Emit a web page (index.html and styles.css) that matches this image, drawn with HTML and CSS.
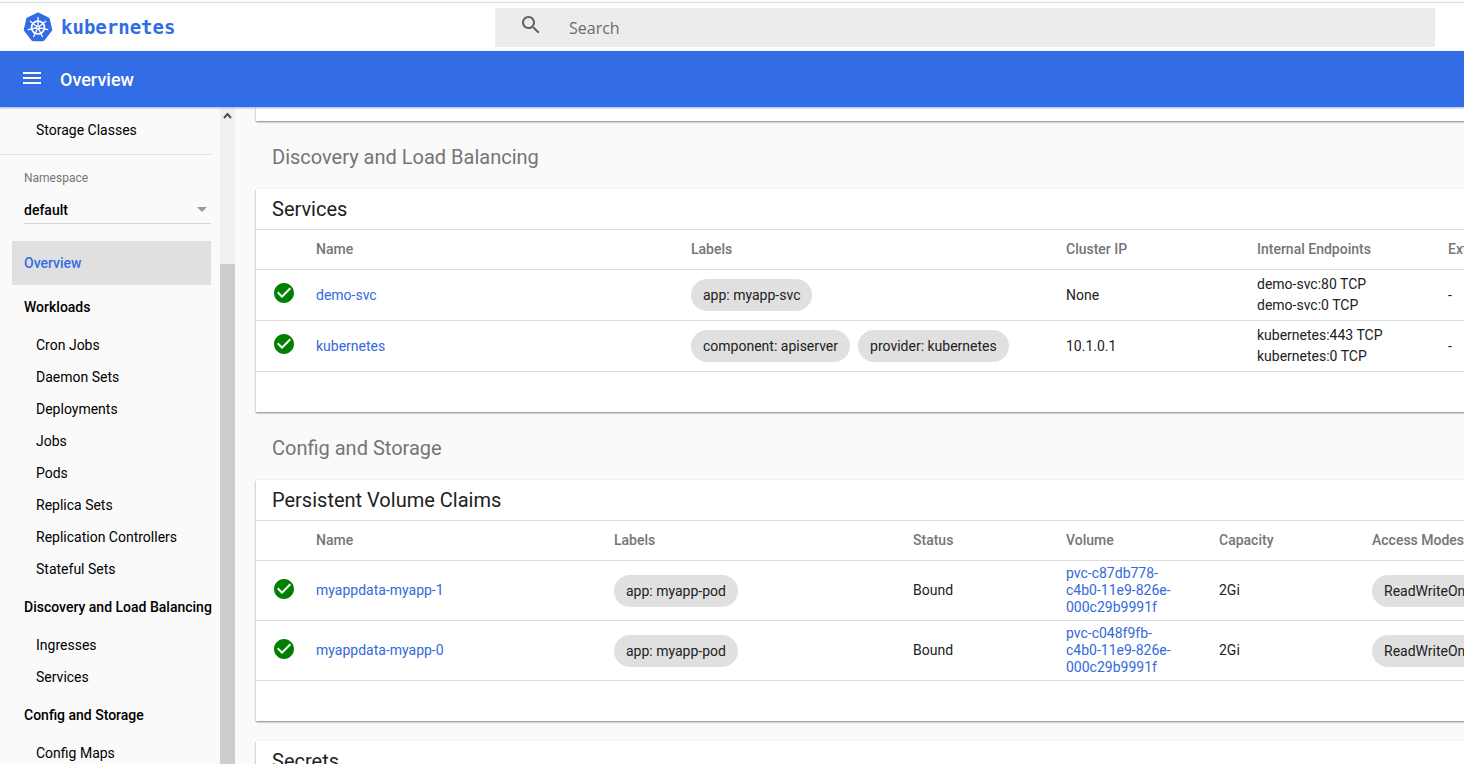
FILE: index.html
```html
<!DOCTYPE html>
<html lang="en">
<head>
<meta charset="utf-8">
<title>Kubernetes Dashboard</title>
<link rel="stylesheet" href="styles.css">
</head>
<body>
<svg class="defs" aria-hidden="true">
  <symbol id="check" viewBox="0 0 24 24"><path d="M12 2C6.48 2 2 6.48 2 12s4.480 10 10 10 10-4.480 10-10S17.520 2 12 2zm-2 15l-5-5 1.410-1.410L10 14.170l7.590-7.590L19 8l-9 9z"/></symbol>
</svg>
<header class="top">
  <a class="brand" href="#">
    <svg class="logo" viewBox="0 0 30 30" aria-hidden="true">
      <path d="M15 1.200 25.800 6.400 28.500 18 21 27.700Q20.500 28.400 19.600 28.400H10.400Q9.500 28.400 9 27.700L1.500 18 4.200 6.400Z" fill="#326ce5" stroke="#326ce5" stroke-width="1.600" stroke-linejoin="round"/>
      <g fill="none" stroke="#fff">
        <circle cx="15" cy="15.500" r="6.400" stroke-width="1.800"/>
        <path stroke-width="1.300" stroke-linecap="round" d="M15 15.500V5.500M15 15.500l7.800-6.200M15 15.500l9.700 2.200M15 15.500l4.300 9M15 15.500l-4.300 9M15 15.500l-9.700 2.200M15 15.500L7.200 9.300"/>
      </g>
      <circle cx="15" cy="15.500" r="2" fill="#fff"/><circle cx="15" cy="15.500" r=".8" fill="#326ce5"/>
    </svg>
    <span>kubernetes</span>
  </a>
  <form class="search">
    <svg class="icon" viewBox="0 0 24 24" aria-hidden="true"><path d="M15.500 14h-.79l-.28-.27C15.410 12.590 16 11.110 16 9.500 16 5.910 13.090 3 9.500 3S3 5.910 3 9.500 5.910 16 9.500 16c1.610 0 3.090-.59 4.230-1.570l.27.28v.79l5 4.990L20.490 19l-4.990-5zm-6 0C7.010 14 5 11.990 5 9.500S7.010 5 9.500 5 14 7.010 14 9.500 11.990 14 9.500 14z"/></svg>
    <input type="text" placeholder="Search" aria-label="Search">
  </form>
</header>
<div class="bar">
  <button class="menu" type="button" aria-label="Menu"><svg class="icon" viewBox="0 0 24 24" aria-hidden="true"><path d="M3 18h18v-2H3v2zm0-5h18v-2H3v2zm0-7v2h18V6H3z"/></svg></button>
  <h1>Overview</h1>
</div>
<div class="body">
  <aside class="side">
    <nav class="nav">
      <a class="item" href="#">Storage Classes</a>
      <div class="namespace">
        <label for="ns">Namespace</label>
        <div class="picker">
          <select id="ns"><option>default</option></select>
          <svg class="caret" viewBox="0 0 10 5" aria-hidden="true"><path d="M0 0h10L5 5z"/></svg>
        </div>
      </div>
      <a class="group active" href="#">Overview</a>
      <a class="group" href="#">Workloads</a>
      <a class="item" href="#">Cron Jobs</a>
      <a class="item" href="#">Daemon Sets</a>
      <a class="item" href="#">Deployments</a>
      <a class="item" href="#">Jobs</a>
      <a class="item" href="#">Pods</a>
      <a class="item" href="#">Replica Sets</a>
      <a class="item" href="#">Replication Controllers</a>
      <a class="item" href="#">Stateful Sets</a>
      <a class="group" href="#">Discovery and Load Balancing</a>
      <a class="item" href="#">Ingresses</a>
      <a class="item" href="#">Services</a>
      <a class="group" href="#">Config and Storage</a>
      <a class="item" href="#">Config Maps</a>
    </nav>
    <div class="scroll" aria-hidden="true">
      <svg class="arrow" viewBox="0 0 15 17"><path d="M4 11l3.500-4 3.500 4" fill="none" stroke="#505050" stroke-width="2"/></svg>
      <div class="thumb"></div>
    </div>
  </aside>
  <main class="main">
    <section class="card tail"></section>
    <h2 class="section">Discovery and Load Balancing</h2>
    <section class="card">
      <h3>Services</h3>
      <table class="services">
        <colgroup><col class="w-icon"><col class="w-375"><col class="w-375"><col class="w-191"><col class="w-191"><col></colgroup>
        <thead><tr><th></th><th>Name</th><th>Labels</th><th>Cluster IP</th><th>Internal Endpoints</th><th>External Endpoints</th></tr></thead>
        <tbody>
          <tr><td class="status"><svg class="icon"><use href="#check"/></svg></td><td><a href="#">demo-svc</a></td><td><div class="chips"><span class="chip">app: myapp-svc</span></div></td><td>None</td><td class="ends">demo-svc:80 TCP<br>demo-svc:0 TCP</td><td>-</td></tr>
          <tr><td class="status"><svg class="icon"><use href="#check"/></svg></td><td><a href="#">kubernetes</a></td><td><div class="chips"><span class="chip">component: apiserver</span><span class="chip">provider: kubernetes</span></div></td><td>10.1.0.1</td><td class="ends">kubernetes:443 TCP<br>kubernetes:0 TCP</td><td>-</td></tr>
        </tbody>
      </table>
      <div class="foot"></div>
    </section>
    <h2 class="section">Config and Storage</h2>
    <section class="card">
      <h3>Persistent Volume Claims</h3>
      <table class="claims">
        <colgroup><col class="w-icon"><col class="w-298"><col class="w-299"><col class="w-153"><col class="w-153"><col class="w-153"><col></colgroup>
        <thead><tr><th></th><th>Name</th><th>Labels</th><th>Status</th><th>Volume</th><th>Capacity</th><th>Access Modes</th></tr></thead>
        <tbody>
          <tr><td class="status"><svg class="icon"><use href="#check"/></svg></td><td><a href="#">myappdata-myapp-1</a></td><td><div class="chips"><span class="chip">app: myapp-pod</span></div></td><td>Bound</td><td class="volume"><a href="#">pvc-c87db778-c4b0-11e9-826e-000c29b9991f</a></td><td>2Gi</td><td><div class="chips"><span class="chip">ReadWriteOnce</span></div></td></tr>
          <tr><td class="status"><svg class="icon"><use href="#check"/></svg></td><td><a href="#">myappdata-myapp-0</a></td><td><div class="chips"><span class="chip">app: myapp-pod</span></div></td><td>Bound</td><td class="volume"><a href="#">pvc-c048f9fb-c4b0-11e9-826e-000c29b9991f</a></td><td>2Gi</td><td><div class="chips"><span class="chip">ReadWriteOnce</span></div></td></tr>
        </tbody>
      </table>
      <div class="foot"></div>
    </section>
    <section class="card next"><h3>Secrets</h3></section>
  </main>
</div>
</body>
</html>
```

FILE: styles.css
```css
* { box-sizing: border-box; }
body {
  margin: 0;
  height: 100vh;
  overflow: hidden;
  display: flex;
  flex-direction: column;
  background: #fafafa;
  color: #212121;
  font: 14px/17px Roboto, sans-serif;
}
a { color: #3369da; text-decoration: none; }
.defs { display: none; }
.icon { display: block; width: 24px; height: 24px; fill: currentColor; flex: none; }

.top {
  flex: none;
  display: flex;
  margin-top: 2px;
  height: 49px;
  border-top: 1px solid #e0e0e0;
  background: #fff;
}
.brand {
  flex: none;
  width: 495px;
  display: flex;
  align-items: center;
  gap: 8px;
  padding-left: 23px;
  font: bold 19px/24px "DejaVu Sans Mono", monospace;
  color: #326ce5;
}
.logo { width: 30px; height: 30px; }
.search {
  flex: 1;
  display: flex;
  margin: 5px 29px 4px 0;
  padding-left: 24px;
  gap: 26px;
  background: #ececec;
  color: #616161;
}
.search .icon { margin-top: 5px; }
.search input {
  flex: 1;
  min-width: 0;
  padding: 0;
  border: 0;
  outline: 0;
  background: none;
  font: 16px/24px "Open Sans", sans-serif;
  color: #616161;
}
.search input::placeholder { color: #6b6b6b; opacity: 1; }

.bar {
  flex: none;
  display: flex;
  align-items: center;
  gap: 16px;
  height: 56px;
  padding-left: 20px;
  background: #326de6;
  color: #fff;
  box-shadow: 0 1px 2px rgba(50, 109, 230, .5);
  z-index: 1;
}
.menu { padding: 0 0 2px; border: 0; background: none; color: inherit; }
.bar h1 { margin: 0; padding-top: 2px; font-size: 18px; line-height: 24px; font-weight: 500; }

.body { flex: 1; min-height: 0; display: flex; }
.side { flex: none; width: 236px; display: flex; overflow: hidden; }
.nav { flex: 1; min-width: 0; display: flex; flex-direction: column; padding-top: 7px; white-space: nowrap; }
.nav a { flex: none; color: #000; }
.item { padding-left: 36px; line-height: 32px; }
.group { margin: 0 9px 0 12px; padding-left: 12px; line-height: 44px; font-weight: 500; }
.nav .active { background: #e0e0e0; color: #326de6; }
.namespace {
  flex: none;
  margin: 8px 9px 17px 0;
  padding: 15px 0 0 24px;
  border-top: 1px solid #e0e0e0;
}
.namespace label { display: block; font-size: 12px; line-height: 16px; color: #757575; }
.picker { display: flex; align-items: center; margin-top: 10px; padding-right: 4px; height: 28px; border-bottom: 1px solid #d6d6d6; }
.picker select {
  flex: 1;
  appearance: none;
  padding: 0;
  border: 0;
  background: none;
  color: #000;
  font: 500 14px/20px Roboto, sans-serif;
}
.caret { width: 10px; height: 5px; fill: #9a9a9a; }
.scroll { flex: none; width: 15px; margin-right: 1px; background: #f0f0f0; display: flex; flex-direction: column; }
.arrow { flex: none; width: 15px; height: 17px; }
.thumb { flex: 1; margin-top: 140px; background: #cdcdcd; }

.main { flex: 1; min-width: 0; overflow: hidden; padding-left: 20px; }
.card {
  min-width: 1600px;
  background: #fff;
  box-shadow: 0 1px 2px rgba(0, 0, 0, .4), 0 1px 1px rgba(0, 0, 0, .1);
}
.tail { height: 14px; }
.next { margin-top: 20px; }
.section { margin: 0; padding: 24px 16px 20px; font-size: 20px; line-height: 24px; font-weight: 400; color: #757575; }
.card h3 { margin: 0; padding: 8px 16px; font-size: 20px; line-height: 24px; font-weight: 400; }
table { width: 100%; table-layout: fixed; border-collapse: separate; border-spacing: 0; }
.w-icon { width: 60px; }
.w-375 { width: 375px; }
.w-299 { width: 299px; }
.w-298 { width: 298px; }
.w-191 { width: 191px; }
.w-153 { width: 153px; }
th, td { padding: 0; text-align: left; vertical-align: middle; border-top: 1px solid #dcdcdc; }
th { height: 40px; font-weight: 500; color: #757575; }
.services td { height: 51px; }
.claims td { height: 60px; }
td.status { padding: 0 0 4px 16px; color: #008000; }
td.ends { line-height: 21px; }
td.volume { padding-right: 40px; }
.chips { display: flex; gap: 8px; }
.chip { padding: 0 12px; border-radius: 16px; line-height: 32px; background: #e0e0e0; }
.foot { height: 41px; border-top: 1px solid #dcdcdc; }
```
